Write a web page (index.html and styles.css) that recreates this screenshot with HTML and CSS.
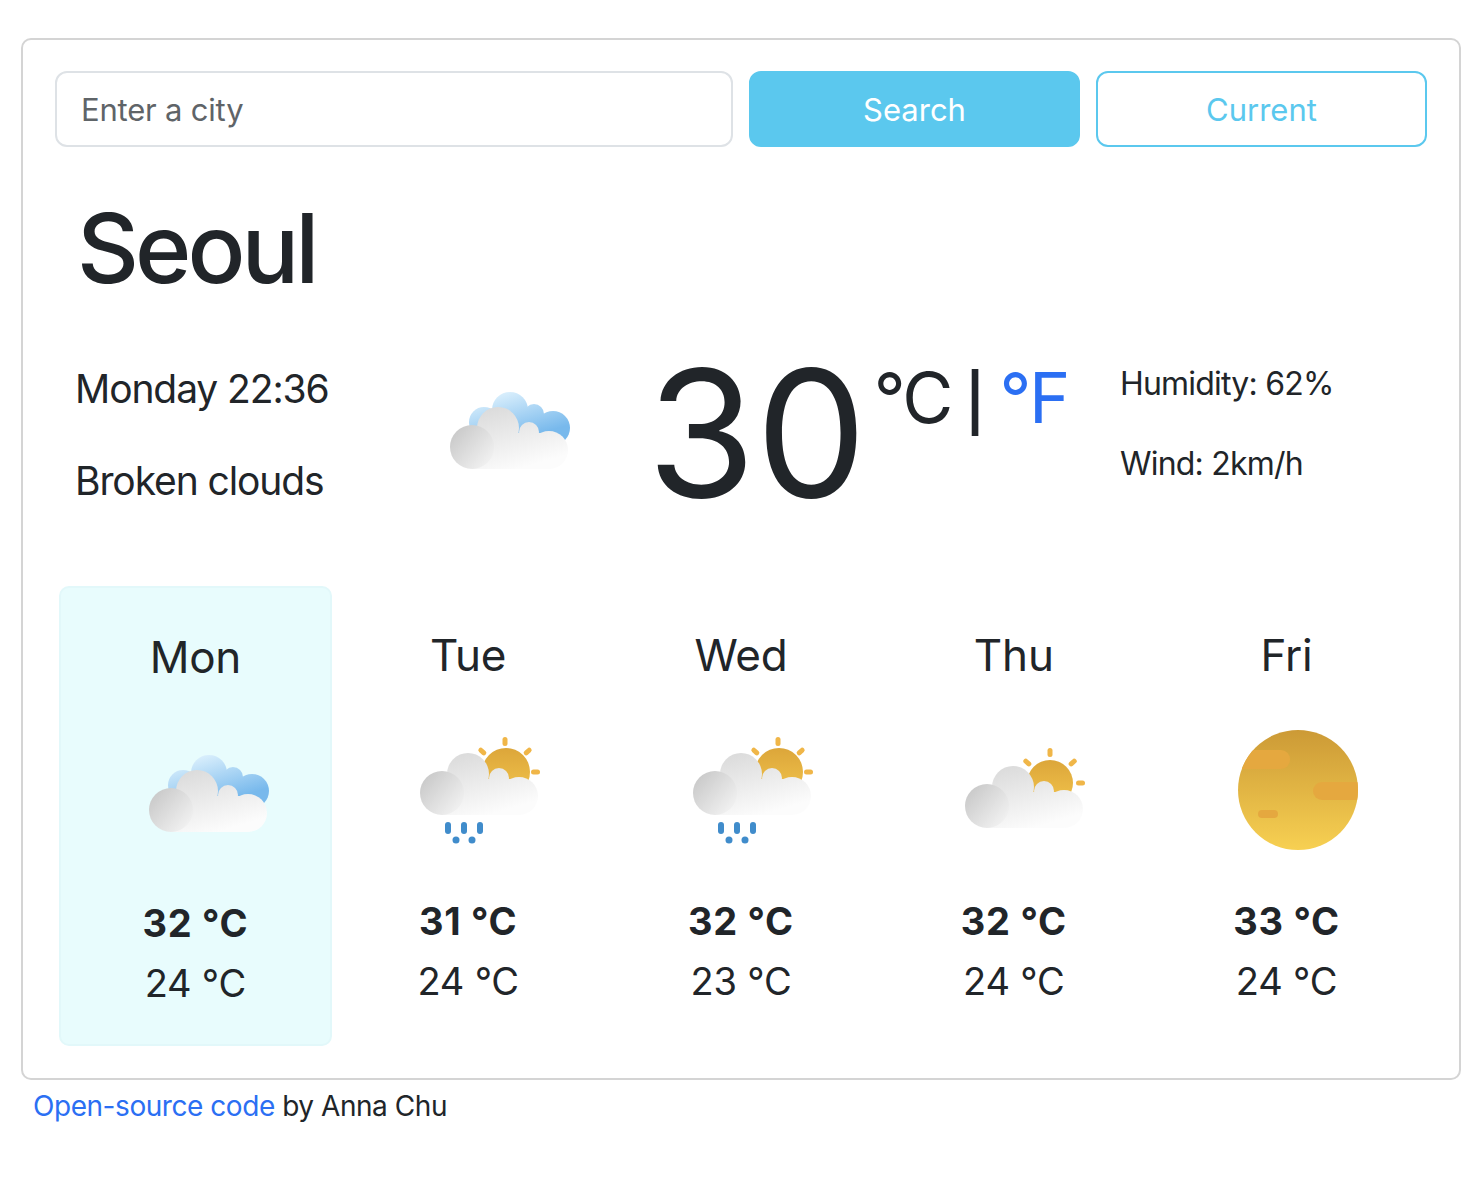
FILE: index.html
```html
<!DOCTYPE html>
<html lang="en">
<head>
    <meta charset="UTF-8">
    <meta name="viewport" content="width=device-width, initial-scale=1.0">
    <title>Weather App</title>
    <link rel="stylesheet" href="styles.css">
</head>
<body>
    <svg class="defs" width="0" height="0" aria-hidden="true">
        <defs>
            <linearGradient id="grey" gradientUnits="userSpaceOnUse" x1="50" y1="40" x2="68" y2="102">
                <stop offset="0" stop-color="#dcdcdc"/>
                <stop offset="1" stop-color="#fcfcfc"/>
            </linearGradient>
            <linearGradient id="ball" gradientUnits="userSpaceOnUse" x1="4" y1="62" x2="42" y2="96">
                <stop offset="0" stop-color="#c8c8c8"/>
                <stop offset="1" stop-color="#f3f3f3"/>
            </linearGradient>
            <linearGradient id="blue" gradientUnits="userSpaceOnUse" x1="58" y1="25" x2="72" y2="72">
                <stop offset="0" stop-color="#d8eefc"/>
                <stop offset="1" stop-color="#78b9ec"/>
            </linearGradient>
            <linearGradient id="sun" x1="0" y1="0" x2="0" y2="1">
                <stop offset="0" stop-color="#dca63a"/>
                <stop offset="1" stop-color="#f2c44c"/>
            </linearGradient>
            <linearGradient id="moon" x1="0" y1="0" x2="0" y2="1">
                <stop offset="0" stop-color="#cc9a36"/>
                <stop offset="1" stop-color="#f7d052"/>
            </linearGradient>
            <clipPath id="moon-clip"><circle cx="60" cy="60" r="60"/></clipPath>

            <g id="cloud">
                <g fill="url(#grey)">
                    <circle cx="48" cy="61" r="21"/>
                    <circle cx="79" cy="65" r="10"/>
                    <circle cx="99" cy="83" r="19"/>
                    <rect x="22" y="66" width="77" height="36"/>
                </g>
                <circle cx="22" cy="80" r="22" fill="url(#ball)"/>
            </g>
            <g id="blue-cloud" fill="url(#blue)">
                <circle cx="60" cy="43" r="18"/>
                <circle cx="84" cy="47" r="10"/>
                <circle cx="103" cy="61" r="17"/>
                <circle cx="34" cy="55" r="15"/>
                <rect x="34" y="50" width="69" height="28"/>
            </g>
            <g id="rays" fill="#f0b648">
                <rect x="-2.500" y="-35" width="5" height="9" rx="2.500"/>
                <rect x="-2.500" y="-35" width="5" height="9" rx="2.500" transform="rotate(48)"/>
                <rect x="-2.500" y="-35" width="5" height="9" rx="2.500" transform="rotate(90)"/>
                <rect x="-2.500" y="-35" width="5" height="9" rx="2.500" transform="rotate(-48)"/>
            </g>
            <g id="rain" fill="#408ccb">
                <rect x="25" y="92" width="6" height="12" rx="3"/>
                <rect x="41" y="92" width="6" height="12" rx="3"/>
                <rect x="57" y="92" width="6" height="12" rx="3"/>
                <circle cx="36" cy="110" r="3.500"/>
                <circle cx="52" cy="110" r="3.500"/>
            </g>
            <symbol id="icon-broken" viewBox="0 0 120 120">
                <use href="#blue-cloud"/>
                <use href="#cloud"/>
            </symbol>
            <symbol id="icon-rain" viewBox="0 0 120 120">
                <use href="#rays" x="85" y="42"/>
                <circle cx="86" cy="42" r="24" fill="url(#sun)"/>
                <use href="#cloud" y="-17"/>
                <use href="#rain"/>
            </symbol>
            <symbol id="icon-few" viewBox="0 0 120 120">
                <use href="#rays" x="85" y="53"/>
                <circle cx="85" cy="53" r="23" fill="url(#sun)"/>
                <use href="#cloud" y="-4"/>
            </symbol>
            <symbol id="icon-clear" viewBox="0 0 120 120">
                <circle cx="60" cy="60" r="60" fill="url(#moon)"/>
                <g clip-path="url(#moon-clip)" fill="#e5a83f">
                    <rect x="-10" y="20" width="62" height="19" rx="9"/>
                    <rect x="75" y="52" width="60" height="18" rx="9"/>
                    <rect x="20" y="80" width="20" height="8" rx="4"/>
                </g>
            </symbol>
        </defs>
    </svg>

    <div class="weather-app">
        <form class="search-form">
            <input class="search-input" type="search" placeholder="Enter a city">
            <button class="btn btn-search" type="button">Search</button>
            <button class="btn btn-current" type="button">Current</button>
        </form>

        <h1 class="city">Seoul</h1>

        <div class="overview">
            <ul class="overview-text">
                <li>Monday 22:36</li>
                <li>Broken clouds</li>
            </ul>
            <svg class="icon overview-icon"><use href="#icon-broken"/></svg>
            <div class="temperature">
                <span class="temp-value">30</span>
                <span class="temp-unit">°C<span class="divider">|</span><a href="#">°F</a></span>
            </div>
            <ul class="overview-extra">
                <li>Humidity: 62%</li>
                <li>Wind: 2km/h</li>
            </ul>
        </div>

        <div class="forecast">
            <div class="day day-active">
                <div class="day-name">Mon</div>
                <svg class="icon"><use href="#icon-broken"/></svg>
                <div class="day-max">32 °C</div>
                <div class="day-min">24 °C</div>
            </div>
            <div class="day">
                <div class="day-name">Tue</div>
                <svg class="icon"><use href="#icon-rain"/></svg>
                <div class="day-max">31 °C</div>
                <div class="day-min">24 °C</div>
            </div>
            <div class="day">
                <div class="day-name">Wed</div>
                <svg class="icon"><use href="#icon-rain"/></svg>
                <div class="day-max">32 °C</div>
                <div class="day-min">23 °C</div>
            </div>
            <div class="day">
                <div class="day-name">Thu</div>
                <svg class="icon"><use href="#icon-few"/></svg>
                <div class="day-max">32 °C</div>
                <div class="day-min">24 °C</div>
            </div>
            <div class="day">
                <div class="day-name">Fri</div>
                <svg class="icon"><use href="#icon-clear"/></svg>
                <div class="day-max">33 °C</div>
                <div class="day-min">24 °C</div>
            </div>
        </div>
    </div>

    <p class="credit"><a href="#">Open-source code</a> by Anna Chu</p>
</body>
</html>
```

FILE: styles.css
```css
body {
    margin: 38px 19px 0 21px;
    font-family: Inter, "Noto Sans", sans-serif;
    color: #212529;
    background: #fff;
}
a {
    color: #2b6ff3;
    text-decoration: none;
}
ul {
    list-style: none;
    margin: 0;
    padding: 0;
}
.defs {
    position: absolute;
}
.icon {
    display: block;
    width: 120px;
    height: 120px;
    filter: blur(0.5px);
}

.weather-app {
    box-sizing: border-box;
    height: 1042px;
    border: 2px solid #d4d4d4;
    border-radius: 10px;
    padding: 31px 32px 0;
}

.search-form {
    display: flex;
    gap: 16px;
}
.search-input {
    box-sizing: border-box;
    flex: 1;
    min-width: 0;
    height: 76px;
    padding: 0 24px;
    border: 2px solid #dee2e6;
    border-radius: 12px;
    font: 31px Inter, sans-serif;
    letter-spacing: -0.2px;
    outline: none;
}
.search-input::placeholder {
    color: #5f6468;
    opacity: 1;
}
.btn {
    box-sizing: border-box;
    width: 331px;
    height: 76px;
    border: 2px solid #5bc8ee;
    border-radius: 12px;
    font: 31px Inter, sans-serif;
}
.btn-search {
    background: #5bc8ee;
    color: #fff;
}
.btn-current {
    background: #fff;
    color: #5bc8ee;
}

.city {
    margin: 43px 0 0 22px;
    font-size: 96px;
    line-height: 116px;
    font-weight: 500;
    letter-spacing: -4px;
}

.overview {
    display: flex;
    margin: 50px 0 0 20px;
    height: 168px;
}
.overview-text {
    width: 375px;
    font-size: 39px;
    line-height: 47px;
    letter-spacing: -1.1px;
}
.overview-text li {
    margin-top: 9px;
    margin-bottom: 45px;
}
.overview-icon {
    margin-top: 11px;
}
.temperature {
    display: flex;
    width: 473px;
    margin-left: 77px;
    line-height: 1;
}
.temp-value {
    font-size: 176px;
    margin-top: -11px;
}
.temp-unit {
    font-size: 70px;
    margin: 7px 0 0 7px;
    letter-spacing: -2.500px;
}
.divider {
    margin: 0 17px 0 14px;
    font-size: 56px;
    font-weight: 600;
}
.overview-extra {
    flex: 1;
    font-size: 32px;
    line-height: 40px;
    letter-spacing: -0.8px;
}
.overview-extra li {
    margin-top: 8px;
    margin-bottom: 40px;
}

.forecast {
    display: grid;
    grid-template-columns: repeat(5, 1fr);
    margin: 62px 4px 0;
}
.day {
    box-sizing: border-box;
    height: 460px;
    padding-top: 39px;
    border: 2px solid transparent;
    text-align: center;
}
.day-active {
    padding-top: 41px;
    background: #e8fcfd;
    border-color: #e2f8fa;
    border-radius: 10px;
}
.day-name {
    font-size: 44px;
    line-height: 56px;
    letter-spacing: -0.2px;
}
.day .icon {
    margin: 47px 0 0 86px;
}
.day-active .icon {
    margin: 45px 0 0 88px;
}
.day-max {
    margin-top: 46px;
    font-size: 38px;
    line-height: 50px;
    font-weight: 700;
    letter-spacing: 0.7px;
}
.day-active .day-max {
    margin-top: 48px;
}
.day-min {
    margin-top: 10px;
    font-size: 38px;
    line-height: 50px;
    letter-spacing: -0.2px;
}

.credit {
    margin: 8px 0 0 12px;
    font-size: 28px;
    line-height: 36px;
    letter-spacing: -0.45px;
}
```
